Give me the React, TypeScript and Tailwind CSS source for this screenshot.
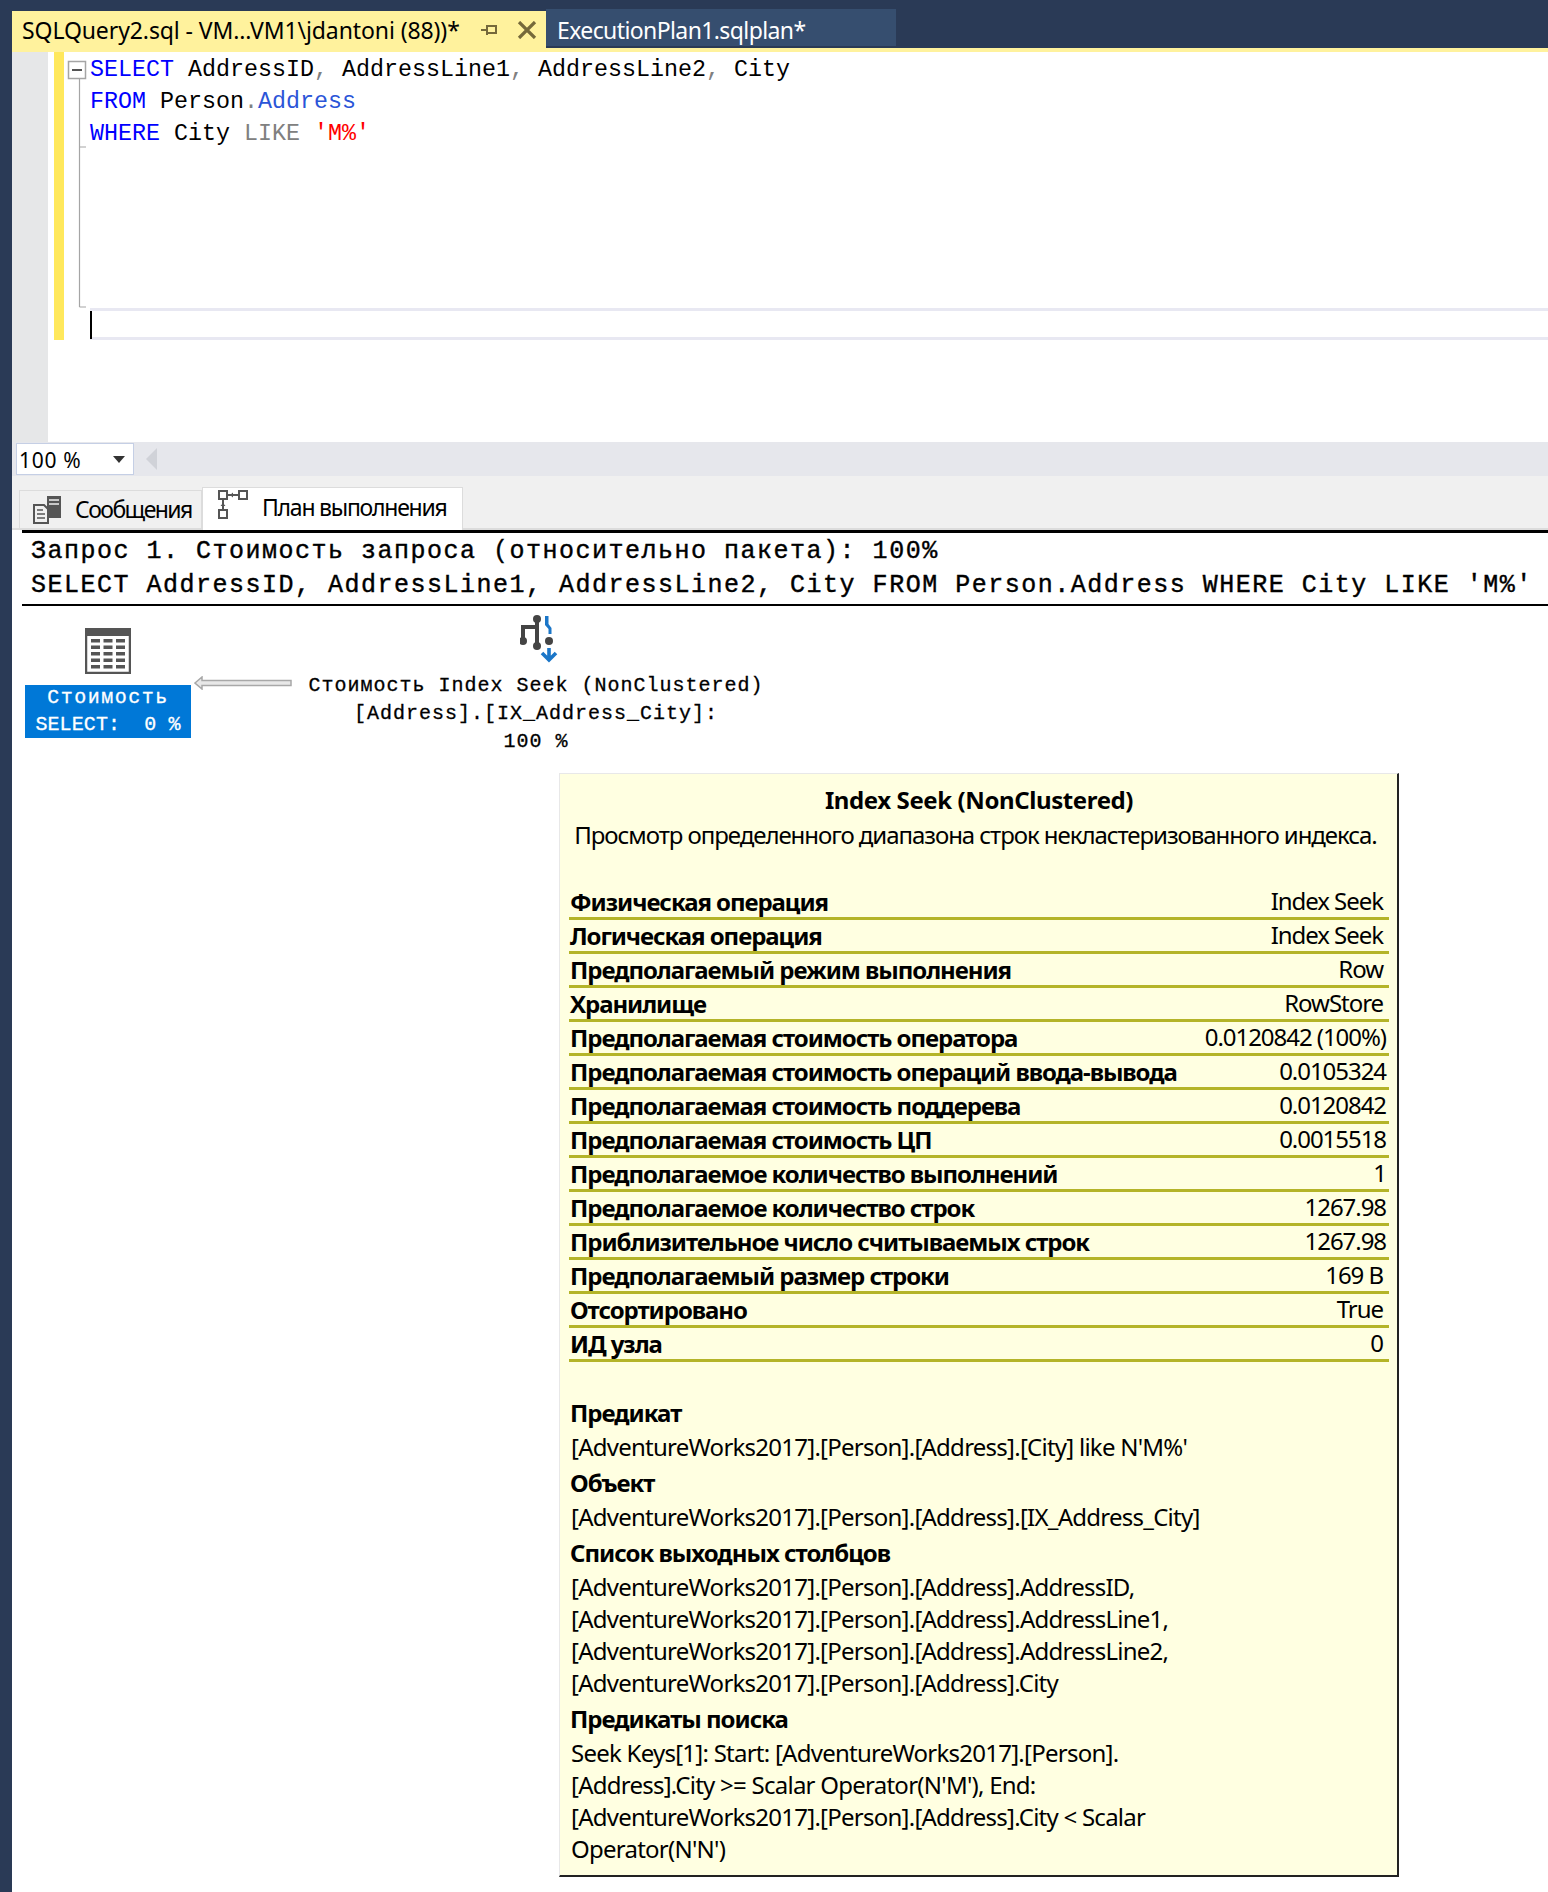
import React from 'react';

const rows = [
  ['Физическая операция', 'Index Seek'],
  ['Логическая операция', 'Index Seek'],
  ['Предполагаемый режим выполнения', 'Row'],
  ['Хранилище', 'RowStore'],
  ['Предполагаемая стоимость оператора', '0.0120842 (100%)'],
  ['Предполагаемая стоимость операций ввода-вывода', '0.0105324'],
  ['Предполагаемая стоимость поддерева', '0.0120842'],
  ['Предполагаемая стоимость ЦП', '0.0015518'],
  ['Предполагаемое количество выполнений', '1'],
  ['Предполагаемое количество строк', '1267.98'],
  ['Приблизительное число считываемых строк', '1267.98'],
  ['Предполагаемый размер строки', '169 B'],
  ['Отсортировано', 'True'],
  ['ИД узла', '0'],
];

// text values sit a little further in from the edge than the numbers
const insetValues = ['Index Seek', 'Row', 'RowStore', 'True', '169 B', '0'];

const sections = [
  { title: 'Предикат', lines: ["[AdventureWorks2017].[Person].[Address].[City] like N'M%'"] },
  { title: 'Объект', lines: ['[AdventureWorks2017].[Person].[Address].[IX_Address_City]'] },
  {
    title: 'Список выходных столбцов',
    lines: [
      '[AdventureWorks2017].[Person].[Address].AddressID,',
      '[AdventureWorks2017].[Person].[Address].AddressLine1,',
      '[AdventureWorks2017].[Person].[Address].AddressLine2,',
      '[AdventureWorks2017].[Person].[Address].City',
    ],
  },
  {
    title: 'Предикаты поиска',
    lines: [
      'Seek Keys[1]: Start: [AdventureWorks2017].[Person].',
      "[Address].City >= Scalar Operator(N'M'), End:",
      '[AdventureWorks2017].[Person].[Address].City < Scalar',
      "Operator(N'N')",
    ],
  },
];

const FoldMargin = () => (
  <svg width="26" height="288" className="shrink-0">
    <rect x="4.5" y="9.5" width="17" height="17" fill="#fff" stroke="#a5a5a5" strokeWidth="1.5" />
    <path d="M8 18h10" stroke="#555" strokeWidth="2" />
    <path d="M15.5 27V255M15.5 95H22M15.5 255H22" stroke="#a5a5a5" strokeWidth="1.2" fill="none" />
  </svg>
);

const MessagesIcon = () => (
  <svg width="30" height="30" viewBox="0 0 30 30" fill="none" className="shrink-0">
    <rect x="15" y="1" width="14" height="22" fill="#555" />
    <path d="M17 5h10M17 9h10" stroke="#eee" strokeWidth="1.5" />
    <path d="M2 10h10l4 4v14H2z" fill="#f0f0f0" stroke="#555" strokeWidth="2" />
    <path d="M5 15h6M5 19h8M5 23h8" stroke="#555" strokeWidth="1.6" />
  </svg>
);

const PlanIcon = () => (
  <svg width="30" height="30" viewBox="0 0 30 30" fill="none" className="shrink-0">
    <g stroke="#555" strokeWidth="2" fill="#fff">
      <rect x="1" y="1" width="8" height="8" />
      <rect x="21" y="1" width="8" height="8" />
      <rect x="1" y="20" width="8" height="8" />
    </g>
    <path d="M10 5h10M5 10v9" stroke="#555" strokeWidth="2" />
    <path d="M12 5l3-2.5v5zM5 13l-2.5 3h5z" fill="#555" />
  </svg>
);

const SelectIcon = () => (
  <svg width="46" height="46" viewBox="0 0 46 46" className="shrink-0">
    <rect x="1" y="1" width="44" height="44" fill="#fff" stroke="#555" strokeWidth="2.5" />
    <rect x="1" y="1" width="44" height="7" fill="#555" />
    {[11, 17.5, 24, 30.5, 37].map((y) => (
      <g key={y} fill="#555">
        <rect x="6" y={y} width="9" height="3.5" />
        <rect x="18.5" y={y} width="9" height="3.5" />
        <rect x="31" y={y} width="9" height="3.5" />
      </g>
    ))}
  </svg>
);

const SeekIcon = () => (
  <svg width="38" height="48" viewBox="0 0 38 48" className="shrink-0">
    <g stroke="#444" strokeWidth="4" fill="none">
      <path d="M3 27V12H17" />
      <path d="M17 3V32" />
    </g>
    <g fill="#444">
      <circle cx="17" cy="4" r="4" />
      <circle cx="3" cy="26" r="4" />
      <circle cx="17" cy="31" r="4" />
      <circle cx="29" cy="26" r="4" />
    </g>
    <path d="M25 1h3.5v8l3 4v6h-3v-5l-3.500-4z" fill="#1b76c8" />
    <path d="M29 33v12M22 38l7 7 7-7" stroke="#1b76c8" strokeWidth="3.6" fill="none" />
  </svg>
);

const FlowArrow = () => (
  <svg width="98" height="14" viewBox="0 0 98 14" className="shrink-0 mt-[70px] ml-[3px]">
    <path d="M1 7l7-6v3.500h89v5H8V13z" fill="#e8e8e8" stroke="#a8a8a8" strokeWidth="1.5" />
  </svg>
);

export default function App() {
  return (
    <div className="relative w-[1548px] h-[1892px] overflow-hidden bg-white flex flex-col font-['Noto_Sans',sans-serif] text-black">
      {/* Document tabs */}
      <div className="h-[48px] bg-[#2a3a56] flex pl-3 shrink-0">
        <div className="mt-[11px] h-[37px] w-[534px] bg-[#fff29d] flex items-center pl-[10px] pt-px text-[23px] tracking-[-0.1px]">
          <span className="whitespace-nowrap">SQLQuery2.sql - VM...VM1\jdantoni (88))*</span>
          <svg width="18" height="14" viewBox="0 0 18 14" className="ml-[20px] shrink-0">
            <path d="M1 7h6M7 2v10M7 3h9v7H7M7 10h9" stroke="#75693a" strokeWidth="2" fill="none" />
          </svg>
          <svg width="20" height="18" viewBox="0 0 20 18" className="ml-[19px] shrink-0">
            <path d="M2 1l16 16M18 1L2 17" stroke="#75693a" strokeWidth="3.2" />
          </svg>
        </div>
        <div className="mt-[9px] h-[37px] w-[350px] bg-[#364e6f] text-white flex items-center pl-[11px] pt-[6px] text-[23px] tracking-[-0.6px]">
          ExecutionPlan1.sqlplan*
        </div>
      </div>

      <div className="flex flex-1 min-h-0">
        <div className="w-3 bg-[#2a3a56] shrink-0" />
        <div className="flex-1 min-w-0 flex flex-col">
          <div className="h-1 bg-[#fff29d] shrink-0" />

          {/* Query editor */}
          <div className="h-[390px] flex shrink-0">
            <div className="w-[36px] bg-[#e6e7e8] shrink-0" />
            <div className="w-[6px] shrink-0" />
            <div className="w-[10px] h-[288px] bg-[#ffe85c] shrink-0" />
            <FoldMargin />
            <div className="flex-1 min-w-0 font-['Liberation_Mono',monospace] text-[23.33px] leading-[32px] pt-[2px] whitespace-pre">
              <div>
                <span className="text-[#0000ff]">SELECT</span> AddressID<span className="text-[#808080]">,</span> AddressLine1<span className="text-[#808080]">,</span> AddressLine2<span className="text-[#808080]">,</span> City
              </div>
              <div>
                <span className="text-[#0000ff]">FROM</span> Person<span className="text-[#808080]">.</span><span className="text-[#2b55d8]">Address</span>
              </div>
              <div>
                <span className="text-[#0000ff]">WHERE</span> City <span className="text-[#808080]">LIKE</span> <span className="text-[#ff0000]">'M%'</span>
              </div>
              <div className="mt-[158px] h-[32px] border-y-[3px] border-[#e8e8f2]">
                <div className="w-[2px] h-[28px] bg-black" />
              </div>
            </div>
          </div>

          {/* Zoom bar */}
          <div className="h-[34px] bg-[#e6e7ec] flex items-center shrink-0">
            <div className="ml-1 w-[118px] h-[32px] bg-white border border-[#c5cfe5] flex items-center justify-between pl-[2px] pr-[8px] text-[21px] tracking-[0.7px]">
              <span className="pt-[3px]">100 %</span>
              <svg width="12" height="7" viewBox="0 0 12 7"><path d="M0 0h12L6 7z" fill="#333" /></svg>
            </div>
            <svg width="12" height="22" viewBox="0 0 12 22" className="ml-3"><path d="M11 0v22L0 11z" fill="#d0d2d8" /></svg>
          </div>

          {/* Results tabs */}
          <div className="h-[54px] bg-[#f0f0f0] border-b-2 border-[#dcdcdc] flex items-end pl-[7px] shrink-0">
            <div className="w-[183px] h-[38px] border border-b-0 border-[#dcdcdc] flex items-center pl-[12px] gap-[13px] text-[23px] tracking-[-1.55px]">
              <MessagesIcon />
              <span>Сообщения</span>
            </div>
            <div className="w-[261px] h-[43px] -mb-[2px] bg-white border border-b-0 border-[#dcdcdc] flex items-center pl-[15px] gap-[14px] text-[23px] tracking-[-1.25px]">
              <div className="-mt-[8px]"><PlanIcon /></div>
              <span className="-mt-[4px]">План выполнения</span>
            </div>
          </div>

          {/* Plan header */}
          <div className="ml-[10px] border-t-[3px] border-b-2 border-black h-[76px] pl-[9px] font-['Liberation_Mono',monospace] text-[25px] tracking-[1.5px] leading-[34px] whitespace-pre shrink-0 pt-[2px] [-webkit-text-stroke:0.4px_#000]">
            <div>Запрос 1. Стоимость запроса (относительно пакета): 100%</div>
            <div>SELECT AddressID, AddressLine1, AddressLine2, City FROM Person.Address WHERE City LIKE 'M%'</div>
          </div>

          {/* Plan diagram */}
          <div className="flex pl-[13px] font-['Liberation_Mono',monospace] text-[20px] tracking-[1px] leading-[28px] whitespace-pre [-webkit-text-stroke:0.3px]">
            <div className="w-[166px] flex flex-col items-center pt-[22px] shrink-0">
              <SelectIcon />
              <div className="mt-[11px] w-full h-[53px] bg-[#0078d7] text-white text-center">
                <div className="leading-[26px] tracking-[1.5px]">Стоимость</div>
                <div className="leading-[28px] tracking-[0.1px]">SELECT:  0 %</div>
              </div>
            </div>
            <FlowArrow />
            <div className="ml-[14px] w-[460px] flex flex-col items-center pt-[9px] shrink-0">
              <div className="ml-[6px]"><SeekIcon /></div>
              <div className="mt-[9px] text-center">
                <div>Стоимость Index Seek (NonClustered)</div>
                <div>[Address].[IX_Address_City]:</div>
                <div>100 %</div>
              </div>
            </div>
          </div>
        </div>
      </div>

      {/* Operator tooltip */}
      <div className="absolute left-[559px] top-[773px] w-[840px] h-[1104px] bg-[#ffffe1] border-t border-l border-[#e8e8e8] border-r-2 border-r-[#222] border-b-2 border-b-[#222] pl-[9px] pr-[8px] pt-[9px] text-[24px]">
        <div className="text-center font-bold leading-[34px] tracking-[-0.4px]">Index Seek (NonClustered)</div>
        <div className="text-center leading-[35px] tracking-[-1.05px] pr-[7px]">Просмотр определенного диапазона строк некластеризованного индекса.</div>
        <div className="mt-[34px]">
          {rows.map(([label, value]) => (
            <div key={label} className="h-[34px] border-b-[3px] border-[#b4b428] flex items-center justify-between pl-[1px] pr-[3px] whitespace-nowrap tracking-[-1.05px]">
              <span className="font-bold">{label}</span>
              <span className={insetValues.includes(value) ? '-mt-[2px] mr-[3px]' : '-mt-[2px]'}>{value}</span>
            </div>
          ))}
        </div>
        <div className="mt-[33px]">
          {sections.map((s) => (
            <div key={s.title} className="mb-[2px]">
              <div className="font-bold leading-[36px] pl-[1px] tracking-[-1px]">{s.title}</div>
              {s.lines.map((l) => (
                <div key={l} className="leading-[32px] whitespace-nowrap pl-[2px] tracking-[-0.75px]">{l}</div>
              ))}
            </div>
          ))}
        </div>
      </div>
    </div>
  );
}
